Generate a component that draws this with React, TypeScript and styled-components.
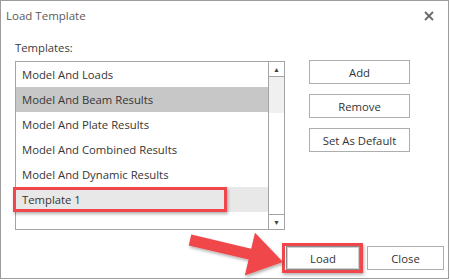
import React from "react";
import styled, { createGlobalStyle } from "styled-components";

const Global = createGlobalStyle`
  html, body { margin: 0; padding: 0; background: #ffffff; }
  body { font-family: "Open Sans", "Noto Sans", sans-serif; }
  * { box-sizing: border-box; }
`;

const Window = styled.div`
  position: relative;
  width: 449px;
  height: 279px;
  border: 1px solid #9c9c9c;
  background: #ffffff;
  display: flex;
  flex-direction: column;
  overflow: hidden;
`;

const TitleBar = styled.div`
  height: 29px;
  display: flex;
  align-items: center;
  justify-content: space-between;
  padding: 0 14px 0 5px;
`;

const Title = styled.span`
  font-size: 11.5px;
  color: #5a5a5a;
`;

const CloseIcon = styled.svg`
  width: 10px;
  height: 10px;
  display: block;
`;

const Content = styled.div`
  padding: 0 14px;
  display: flex;
  flex-direction: column;
`;

const Label = styled.div`
  margin-top: 10px;
  height: 16px;
  line-height: 16px;
  font-size: 11.3px;
  color: #3a3a3a;
`;

const Main = styled.div`
  margin-top: 5px;
  display: flex;
  align-items: flex-start;
  gap: 24px;
`;

const ListBox = styled.div`
  width: 270px;
  height: 169px;
  border: 1px solid #a4a4a4;
  display: flex;
`;

const Items = styled.div`
  flex: 1;
  display: flex;
  flex-direction: column;
`;

const Item = styled.div<{ $bg?: string }>`
  position: relative;
  height: 25px;
  line-height: 25px;
  padding-left: 6px;
  font-size: 11.3px;
  color: #363636;
  background: ${(p) => p.$bg ?? "transparent"};
  white-space: nowrap;
`;

const Highlight = styled.div`
  position: absolute;
  left: -3px;
  top: 0px;
  width: 214px;
  height: 25px;
  border: 3px solid #f0464c;
  box-shadow: 1px 2px 3px rgba(0, 0, 0, 0.3);
`;

const ScrollBar = styled.div`
  width: 16px;
  border-left: 1px solid #a4a4a4;
  display: flex;
  flex-direction: column;
`;

const ScrollBtn = styled.div<{ $top?: boolean }>`
  height: 15px;
  display: flex;
  align-items: center;
  justify-content: center;
  font-size: 7px;
  color: #444;
  ${(p) => (p.$top ? "border-bottom: 1px solid #a4a4a4;" : "border-top: 1px solid #a4a4a4;")}
`;

const Thumb = styled.div`
  height: 36px;
  background: #f0f0f0;
`;

const Track = styled.div`
  flex: 1;
`;

const Side = styled.div`
  margin-top: -1px;
  display: flex;
  flex-direction: column;
  gap: 10px;
`;

const Button = styled.div<{ $w: number; $strong?: boolean }>`
  position: relative;
  width: ${(p) => p.$w}px;
  height: 24px;
  border: 1px solid ${(p) => (p.$strong ? "#8a8a8a" : "#adadad")};
  ${(p) => (p.$strong ? "box-shadow: inset 0 0 0 1px #cfcfcf;" : "")}
  background: #ffffff;
  display: flex;
  align-items: center;
  justify-content: center;
  font-size: 11.3px;
  color: #333333;
`;

const Footer = styled.div`
  margin-top: 16px;
  padding-right: 4px;
  display: flex;
  justify-content: flex-end;
  gap: 7px;
`;

const LoadMark = styled.div`
  position: absolute;
  left: -5px;
  top: -4px;
  right: -4px;
  bottom: -4px;
  border: 3px solid #f0464c;
  box-shadow: 1px 2px 3px rgba(0, 0, 0, 0.3);
`;

const ArrowLayer = styled.svg`
  position: absolute;
  left: 0;
  top: 0;
  width: 449px;
  height: 279px;
  pointer-events: none;
`;

const items = [
  { label: "Model And Loads" },
  { label: "Model And Beam Results", bg: "#c7c7c7" },
  { label: "Model And Plate Results" },
  { label: "Model And Combined Results" },
  { label: "Model And Dynamic Results" },
  { label: "Template 1", bg: "#e8e8e8", mark: true },
];

export default function App() {
  return (
    <>
      <Global />
      <Window>
        <TitleBar>
          <Title>Load Template</Title>
          <CloseIcon viewBox="0 0 10 10">
            <path d="M1 1 L9 9 M9 1 L1 9" stroke="#6a6a6a" strokeWidth="1.8" />
          </CloseIcon>
        </TitleBar>
        <Content>
          <Label>Templates:</Label>
          <Main>
            <ListBox>
              <Items>
                {items.map((it) => (
                  <Item key={it.label} $bg={it.bg}>
                    {it.label}
                    {it.mark && <Highlight />}
                  </Item>
                ))}
              </Items>
              <ScrollBar>
                <ScrollBtn $top>▲</ScrollBtn>
                <Thumb />
                <Track />
                <ScrollBtn>▼</ScrollBtn>
              </ScrollBar>
            </ListBox>
            <Side>
              <Button $w={101}>Add</Button>
              <Button $w={101}>Remove</Button>
              <Button $w={101}>Set As Default</Button>
            </Side>
          </Main>
        </Content>
        <Footer>
          <Button $w={74} $strong>
            Load
            <LoadMark />
          </Button>
          <Button $w={77}>Close</Button>
        </Footer>
        <ArrowLayer viewBox="0 0 449 279">
          <defs>
            <filter id="sh" x="-20%" y="-20%" width="140%" height="140%">
              <feDropShadow dx="1" dy="2" stdDeviation="1.5" floodColor="#000" floodOpacity="0.3" />
            </filter>
          </defs>
          <polygon
            filter="url(#sh)"
            fill="#f0464c"
            points="190.3,233.6 250.2,247.8 254,231.8 282,261 243.8,274.6 247.6,258.6 187.7,244.4"
          />
        </ArrowLayer>
      </Window>
    </>
  );
}
